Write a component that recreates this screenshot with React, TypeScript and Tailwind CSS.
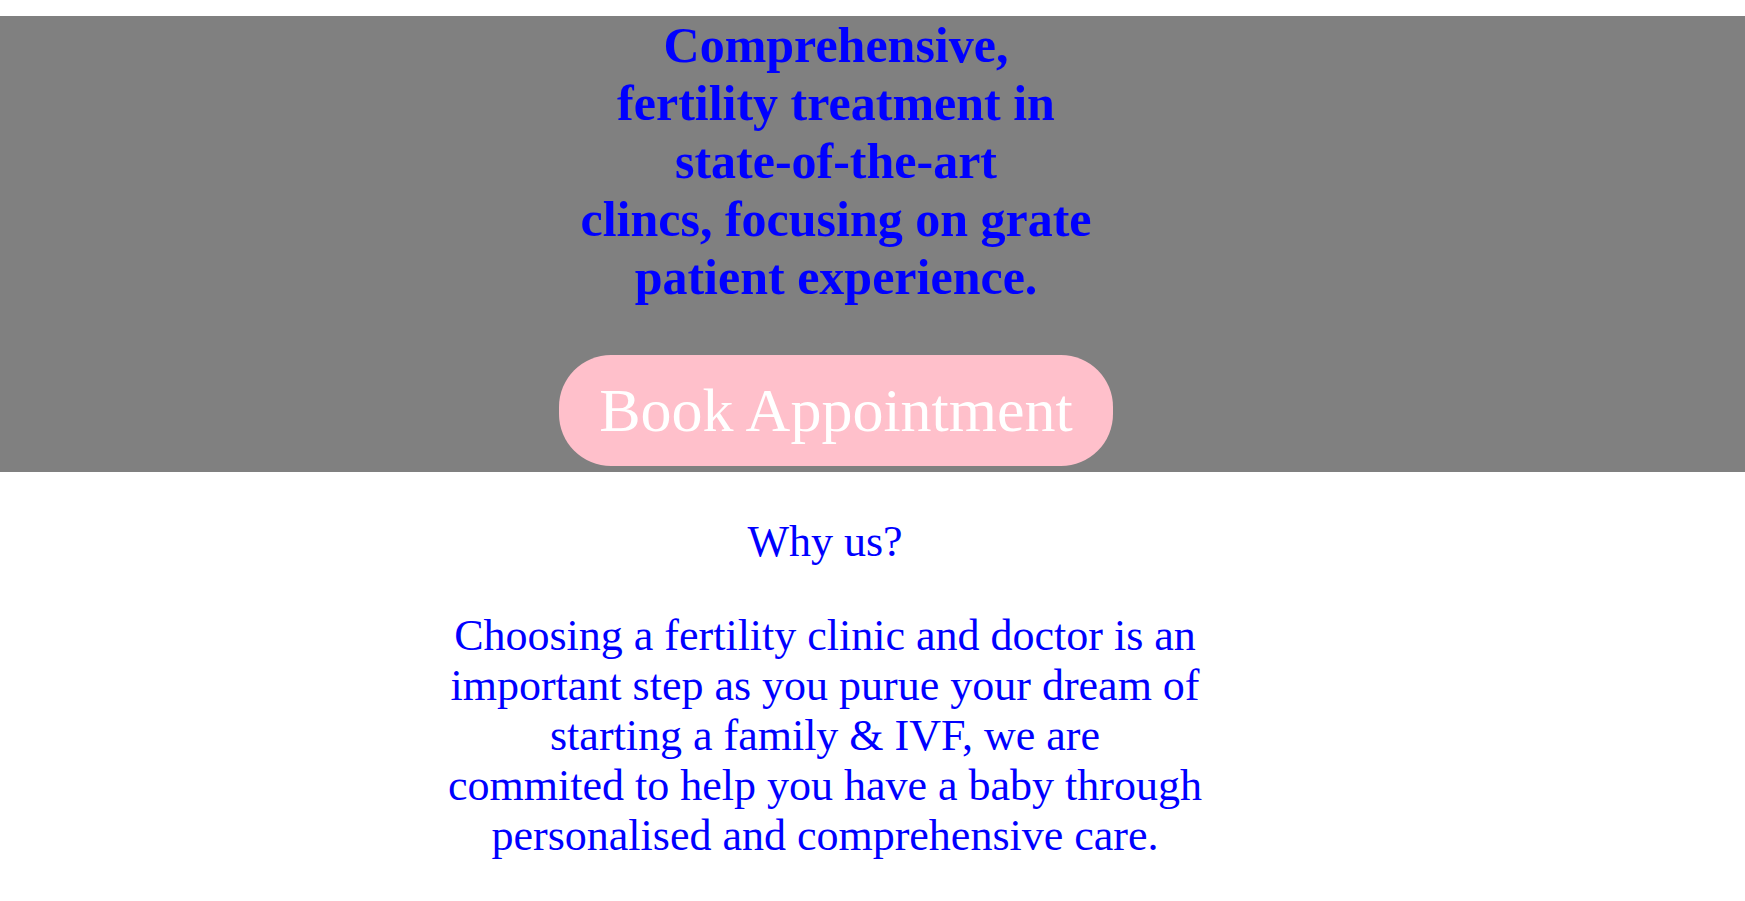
import React from "react";

export default function App() {
  return (
    <div className="min-h-screen w-full bg-white font-['Liberation_Serif','Times_New_Roman',serif] text-[#0000ff]">
      <section className="mt-4 w-full bg-[#808080] pb-[6px] pr-[73px] text-center">
        <h1 className="m-0 text-[50px] font-bold leading-[normal]">
          Comprehensive,
          <br />
          fertility treatment in
          <br />
          state-of-the-art
          <br />
          clincs, focusing on grate
          <br />
          patient experience.
        </h1>
        <div className="mt-[49px] flex justify-center">
          <button className="rounded-[52px] bg-[#ffc0cb] px-[40px] py-[20px] font-['Liberation_Serif','Times_New_Roman',serif] text-[62px] leading-[normal] text-white">
            Book Appointment
          </button>
        </div>
      </section>
      <section className="pr-[95px] text-center text-[44px] leading-[50px]">
        <p className="mt-[45px]">Why us?</p>
        <p className="mt-[44px] mb-[44px]">
          Choosing a fertility clinic and doctor is an
          <br />
          important step as you purue your dream of
          <br />
          starting a family &amp; IVF, we are
          <br />
          commited to help you have a baby through
          <br />
          personalised and comprehensive care.
        </p>
      </section>
    </div>
  );
}
